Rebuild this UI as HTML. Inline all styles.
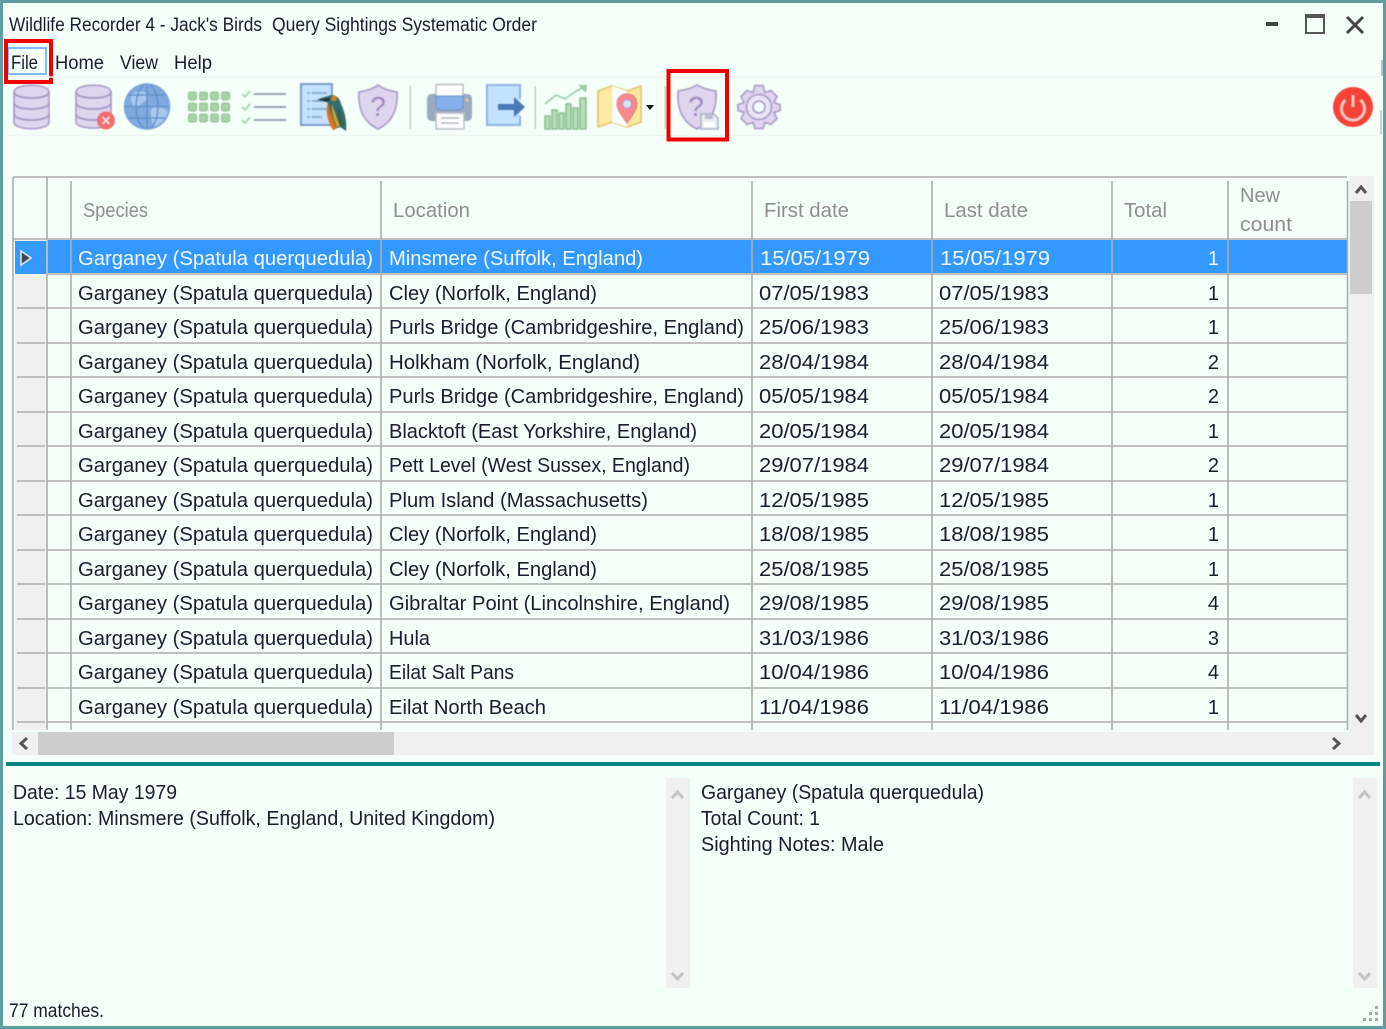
<!DOCTYPE html>
<html>
<head>
<meta charset="utf-8">
<title>Wildlife Recorder 4</title>
<style>
html,body{margin:0;padding:0;background:#f5fffa;}
svg{display:block;font-family:"Liberation Sans",sans-serif;}
.t{font-size:20px;fill:#1c1c2c;}
.s{font-size:20px;fill:#f2f8ff;}
.h{font-size:20px;fill:#8f8f8f;}
.m{font-size:19px;fill:#1c1c2c;}
.e{text-anchor:end;}
.l{stroke:#adadad;stroke-width:1.6;fill:none;}
.a{fill:none;stroke:#555;stroke-width:3;}
.g{fill:none;stroke:#c4c4c4;stroke-width:3;}
.d{fill:#dfd5ee;stroke:#b0a1ca;stroke-width:1.8;}
.i{filter:blur(.5px);}
</style>
</head>
<body>
<svg width="1386" height="1029" viewBox="0 0 1386 1029" xmlns="http://www.w3.org/2000/svg">
<rect width="1386" height="1029" fill="#f5fffa"/>
<rect x="1.5" y="1.5" width="1383" height="1026" fill="none" stroke="#5f9ea0" stroke-width="3"/>

<!-- title -->
<text class="m" x="9" y="31" textLength="253" lengthAdjust="spacingAndGlyphs">Wildlife Recorder 4 - Jack's Birds</text>
<text class="m" x="272" y="31" textLength="265" lengthAdjust="spacingAndGlyphs">Query Sightings Systematic Order</text>
<rect x="1266" y="22" width="12" height="4" fill="#444"/>
<rect x="1306" y="15" width="18" height="18" fill="none" stroke="#555" stroke-width="2"/>
<rect x="1306" y="14" width="18" height="4" fill="#555"/>
<path d="M1347 17L1363 33M1363 17L1347 33" stroke="#444" stroke-width="3" fill="none"/>

<!-- menu -->
<text class="m" x="11" y="69" textLength="27" lengthAdjust="spacingAndGlyphs">File</text>
<text class="m" x="55" y="69" textLength="49" lengthAdjust="spacingAndGlyphs">Home</text>
<text class="m" x="120" y="69" textLength="38" lengthAdjust="spacingAndGlyphs">View</text>
<text class="m" x="174" y="69" textLength="38" lengthAdjust="spacingAndGlyphs">Help</text>
<rect x="8" y="48" width="38" height="26" fill="none" stroke="#55aaff" stroke-width="1.5"/>
<rect x="6" y="41" width="45" height="41" fill="none" stroke="#f00000" stroke-width="4"/>

<!-- toolbar rules -->
<path d="M8 77H1380M8 135.500H1380" stroke="#edf5f1" stroke-width="1.500"/>
<rect x="1381" y="60" width="2" height="16" fill="#b8c4c4"/>
<rect x="1380" y="110" width="2" height="24" fill="#c8d0d0"/>

<g class="i">
<!-- database -->
<g>
<path class="d" d="M14 92C14 83 49 83 49 92V122C49 131 14 131 14 122Z"/>
<path d="M14 92C14 100 49 100 49 92M14 103C14 111 49 111 49 103M14 114C14 122 49 122 49 114" fill="none" stroke="#a797c2" stroke-width="1.800"/>
</g>
<!-- database x -->
<g>
<path class="d" d="M76 92C76 83 111 83 111 92V122C111 130 76 130 76 122Z"/>
<path d="M76 92C76 100 111 100 111 92M76 103C76 111 111 111 111 103M76 114C76 122 111 122 111 114" fill="none" stroke="#a797c2" stroke-width="1.800"/>
<circle cx="106" cy="120.500" r="9" fill="#ee6f6f"/>
<path d="M102.500 117L109.500 124M109.500 117L102.500 124" stroke="#fbdede" stroke-width="1.800"/>
</g>
<!-- globe -->
<g>
<circle cx="147" cy="106.500" r="22.500" fill="#7fa9df"/>
<path d="M132 94C138 90 146 91 148 96C146 102 140 104 136 108C131 106 130 98 132 94ZM152 108C158 106 166 108 168 112C164 122 158 126 153 126C152 120 149 114 152 108Z" fill="#a9c8ee"/>
<ellipse cx="147" cy="106.500" rx="11" ry="22.500" fill="none" stroke="#5f8ecb" stroke-width="1.300"/>
<path d="M147 84V129M125 106.500H170M128 95H166M128 118H166" stroke="#5f8ecb" stroke-width="1.300" fill="none"/>
<circle cx="147" cy="106.500" r="22.500" fill="none" stroke="#7fa6d8" stroke-width="1.500"/>
</g>
<!-- grid -->
<g fill="#a8d2a8" stroke="#90c090" stroke-width="1">
<rect x="188.500" y="92" width="8" height="8" rx="2"/><rect x="199.500" y="92" width="8" height="8" rx="2"/><rect x="210.500" y="92" width="8" height="8" rx="2"/><rect x="221.500" y="92" width="8" height="8" rx="2"/>
<rect x="188.500" y="103" width="8" height="8" rx="2"/><rect x="199.500" y="103" width="8" height="8" rx="2"/><rect x="210.500" y="103" width="8" height="8" rx="2"/><rect x="221.500" y="103" width="8" height="8" rx="2"/>
<rect x="188.500" y="114" width="8" height="8" rx="2"/><rect x="199.500" y="114" width="8" height="8" rx="2"/><rect x="210.500" y="114" width="8" height="8" rx="2"/><rect x="221.500" y="114" width="8" height="8" rx="2"/>
</g>
<!-- checklist -->
<g fill="none">
<path d="M242 94L245 97L250 91M242 107L245 110L250 104M242 120L245 123L250 117" stroke="#a8d4b0" stroke-width="1.800"/>
<path d="M254 94H286M254 107H286M254 120H286" stroke="#8a98a6" stroke-width="1.800"/>
</g>
<!-- doc + bird -->
<g>
<rect x="301" y="84" width="31" height="41" fill="#c3e2ff" stroke="#7f9fcb" stroke-width="2"/>
<path d="M307 93H327M307 101H327M307 109H327M307 117H322" stroke="#7f9fcb" stroke-width="1.500" stroke-dasharray="3 2 14 0"/>
<path d="M318 99L328 96C335 93 340 98 341 104C345 112 347 122 346 131L340 127L333 130C329 122 326 112 328 103Z" fill="#2f6f72"/>
<path d="M328 102C330 111 333 120 337 128L333 130C328 122 325 112 328 102Z" fill="#dd6f1c"/>
<path d="M332 104C335 112 337 119 340 126L337 127C334 120 331 112 332 104Z" fill="#c9a52c"/>
<path d="M338 107C341 114 343 121 343 127L340 126C338 120 337 113 338 107Z" fill="#3f5a48"/>
<path d="M316 100L330 98L329 101Z" fill="#2a2a2a"/>
<circle cx="334" cy="98.500" r="3" fill="#c7802e"/>
</g>
<!-- shield -->
<g>
<path class="d" d="M359 92C366 91 373 89 378 85C383 89 390 91 397 92C398 108 393 122 378 129C363 122 358 108 359 92Z"/>
<text x="378" y="116" font-size="28" text-anchor="middle" fill="#a287bf">?</text>
</g>
<rect x="409.500" y="86" width="1.500" height="43" fill="#c4c8c8"/>
<!-- printer -->
<g>
<rect x="436" y="84.500" width="27" height="18" fill="#ffffff" stroke="#b9bec6" stroke-width="1.500"/>
<path d="M432 94H436V97H463V94H467C470 94 472 96 472 99V116C472 119 470 121 467 121H432C429 121 427 119 427 116V99C427 96 429 94 432 94Z" fill="#9aaabf"/>
<path d="M436 96H463V106C463 108 461 110 459 110H440C438 110 436 108 436 106Z" fill="#85afea" stroke="#6f93c6"/>
<circle cx="467" cy="100" r="1.500" fill="#e6d97e"/>
<rect x="436" y="113" width="28" height="16" fill="#ffffff" stroke="#b9bec6" stroke-width="1.500"/>
<path d="M441 118H459M441 123H459" stroke="#b0b6c0" stroke-width="1.500"/>
</g>
<!-- export -->
<g>
<rect x="487" y="85" width="33" height="40" fill="#c3e2ff"/>
<path d="M520 99V85H487V125H520V116" fill="none" stroke="#8fb2de" stroke-width="2"/>
<path d="M498 104H514V97L525 107L514 117V110H498Z" fill="#4a78b6"/>
</g>
<rect x="534.500" y="86" width="1.500" height="43" fill="#c4c8c8"/>
<!-- chart -->
<g>
<path d="M545 104L556 95L565 99L576 91L584 87" fill="none" stroke="#9ccaa6" stroke-width="1.600"/>
<path d="M578 85L587 85L586 93Z" fill="#9ccaa6"/>
<g fill="#b8deb8" stroke="#86ba8a" stroke-width="1.400">
<rect x="545" y="116" width="5" height="13"/><rect x="552" y="110" width="5" height="19"/><rect x="559" y="113" width="5" height="16"/><rect x="566" y="104" width="5" height="25"/><rect x="573" y="108" width="5" height="21"/><rect x="580" y="98" width="6" height="31"/>
</g>
</g>
<!-- map -->
<g>
<path d="M598 91L612 86L627 91L641 86V122L627 127L612 122L598 127Z" fill="#ffe9a3" stroke="#e3cd80" stroke-width="2"/>
<path d="M612 86L627 91V127L612 122Z" fill="#fbfbfb"/>
<path d="M627 123C620 113 617 109 617 104C617 98 621 94 627 94C633 94 637 98 637 104C637 109 634 113 627 123Z" fill="#f58b8b" stroke="#e77a7a"/>
<circle cx="627" cy="104" r="4.500" fill="#d9e4f2" stroke="#ab8cc0"/>
</g>
<rect x="664.500" y="86" width="1.500" height="43" fill="#c4c8c8"/>
<!-- shield save -->
<g>
<path class="d" d="M678 91C685 90 692 88 697 85C702 88 709 90 716 91C717 108 712 122 697 129C682 122 677 108 678 91Z"/>
<text x="696" y="116" font-size="28" text-anchor="middle" fill="#a287bf">?</text>
<path d="M701 114H714L718 118V129H701Z" fill="#e9edf4" stroke="#a9b2c2" stroke-width="1.500"/>
<rect x="705" y="114" width="8" height="5" fill="#b8c0cf"/>
<rect x="704" y="122" width="11" height="5" fill="#fff"/>
</g>
<!-- gear -->
<g>
<path class="d" d="M755 85H763L765 92L771 90L777 96L774 102L780 104V110L774 112L777 118L771 124L765 122L763 128H755L753 122L747 124L741 118L744 112L738 110V104L744 102L741 96L747 90L753 92Z" transform="translate(0 .5)"/>
<circle cx="759" cy="107" r="12.500" fill="#ece5f5" stroke="#b0a1ca" stroke-width="1.800"/>
<circle cx="759" cy="107" r="6" fill="#f5fffa" stroke="#b0a1ca" stroke-width="1.800"/>
</g>
<!-- power -->
<g>
<circle cx="1353" cy="107" r="20" fill="#f44336"/>
<path d="M1345.500 100A11.500 11.500 0 1 0 1360.500 100" fill="none" stroke="#fbc9c5" stroke-width="3"/>
<path d="M1353 95V107" stroke="#fbc9c5" stroke-width="3"/>
</g>
</g>
<path d="M646 105H654L650 110Z" fill="#111"/>
<rect x="668.500" y="71" width="58.500" height="68.500" fill="none" stroke="#f00000" stroke-width="4"/>

<!-- selected row + row header bg -->
<rect x="15" y="240" width="32" height="490" fill="#f0f0f0"/>
<rect x="71" y="240" width="1276" height="33" fill="#3399ff"/>
<rect x="48" y="240" width="23" height="33" fill="#3399ff"/>
<rect x="15" y="241" width="31" height="33" fill="#3399ff"/>
<path d="M21 251L31 258L21 265Z" fill="#444" stroke="#dfeaf5" stroke-width="1.500"/>

<!-- grid lines -->
<path class="l" d="M13 177H1347M13 177V730M47 177V730M71 181V730M381 181V730M752 181V730M932 181V730M1112 181V730M1228 181V730M1347.500 181V730"/>
<path class="l" d="M13 239H1347M47 274H1347M47 308H1347M47 343H1347M47 377H1347M47 412H1347M47 446H1347M47 481H1347M47 515H1347M47 550H1347M47 584H1347M47 619H1347M47 653H1347M47 688H1347M47 722H1347"/>
<path class="l" d="M17 308H45M17 343H45M17 377H45M17 412H45M17 446H45M17 481H45M17 515H45M17 550H45M17 584H45M17 619H45M17 653H45M17 688H45M17 722H45"/>

<!-- header -->
<text class="h" x="83" y="217" textLength="65" lengthAdjust="spacingAndGlyphs">Species</text>
<text class="h" x="393" y="217" textLength="77" lengthAdjust="spacingAndGlyphs">Location</text>
<text class="h" x="764" y="217" textLength="85" lengthAdjust="spacingAndGlyphs">First date</text>
<text class="h" x="944" y="217" textLength="84" lengthAdjust="spacingAndGlyphs">Last date</text>
<text class="h" x="1124" y="217" textLength="43" lengthAdjust="spacingAndGlyphs">Total</text>
<text class="h" x="1240" y="202" textLength="40" lengthAdjust="spacingAndGlyphs">New</text>
<text class="h" x="1240" y="231" textLength="52" lengthAdjust="spacingAndGlyphs">count</text>

<!-- rows -->
<text class="s" x="78" y="265" textLength="295" lengthAdjust="spacingAndGlyphs">Garganey (Spatula querquedula)</text><text class="s" x="389" y="265" textLength="254" lengthAdjust="spacingAndGlyphs">Minsmere (Suffolk, England)</text><text class="s" x="760" y="265" textLength="110" lengthAdjust="spacingAndGlyphs">15/05/1979</text><text class="s" x="940" y="265" textLength="110" lengthAdjust="spacingAndGlyphs">15/05/1979</text><text class="s e" x="1219" y="265">1</text>

<text class="t" x="78" y="300" textLength="295" lengthAdjust="spacingAndGlyphs">Garganey (Spatula querquedula)</text><text class="t" x="389" y="300" textLength="208" lengthAdjust="spacingAndGlyphs">Cley (Norfolk, England)</text><text class="t" x="759" y="300" textLength="110" lengthAdjust="spacingAndGlyphs">07/05/1983</text><text class="t" x="939" y="300" textLength="110" lengthAdjust="spacingAndGlyphs">07/05/1983</text><text class="t e" x="1219" y="300">1</text>

<text class="t" x="78" y="334" textLength="295" lengthAdjust="spacingAndGlyphs">Garganey (Spatula querquedula)</text><text class="t" x="389" y="334" textLength="355" lengthAdjust="spacingAndGlyphs">Purls Bridge (Cambridgeshire, England)</text><text class="t" x="759" y="334" textLength="110" lengthAdjust="spacingAndGlyphs">25/06/1983</text><text class="t" x="939" y="334" textLength="110" lengthAdjust="spacingAndGlyphs">25/06/1983</text><text class="t e" x="1219" y="334">1</text>

<text class="t" x="78" y="369" textLength="295" lengthAdjust="spacingAndGlyphs">Garganey (Spatula querquedula)</text><text class="t" x="389" y="369" textLength="251" lengthAdjust="spacingAndGlyphs">Holkham (Norfolk, England)</text><text class="t" x="759" y="369" textLength="110" lengthAdjust="spacingAndGlyphs">28/04/1984</text><text class="t" x="939" y="369" textLength="110" lengthAdjust="spacingAndGlyphs">28/04/1984</text><text class="t e" x="1219" y="369">2</text>

<text class="t" x="78" y="403" textLength="295" lengthAdjust="spacingAndGlyphs">Garganey (Spatula querquedula)</text><text class="t" x="389" y="403" textLength="355" lengthAdjust="spacingAndGlyphs">Purls Bridge (Cambridgeshire, England)</text><text class="t" x="759" y="403" textLength="110" lengthAdjust="spacingAndGlyphs">05/05/1984</text><text class="t" x="939" y="403" textLength="110" lengthAdjust="spacingAndGlyphs">05/05/1984</text><text class="t e" x="1219" y="403">2</text>

<text class="t" x="78" y="438" textLength="295" lengthAdjust="spacingAndGlyphs">Garganey (Spatula querquedula)</text><text class="t" x="389" y="438" textLength="308" lengthAdjust="spacingAndGlyphs">Blacktoft (East Yorkshire, England)</text><text class="t" x="759" y="438" textLength="110" lengthAdjust="spacingAndGlyphs">20/05/1984</text><text class="t" x="939" y="438" textLength="110" lengthAdjust="spacingAndGlyphs">20/05/1984</text><text class="t e" x="1219" y="438">1</text>

<text class="t" x="78" y="472" textLength="295" lengthAdjust="spacingAndGlyphs">Garganey (Spatula querquedula)</text><text class="t" x="389" y="472" textLength="301" lengthAdjust="spacingAndGlyphs">Pett Level (West Sussex, England)</text><text class="t" x="759" y="472" textLength="110" lengthAdjust="spacingAndGlyphs">29/07/1984</text><text class="t" x="939" y="472" textLength="110" lengthAdjust="spacingAndGlyphs">29/07/1984</text><text class="t e" x="1219" y="472">2</text>

<text class="t" x="78" y="507" textLength="295" lengthAdjust="spacingAndGlyphs">Garganey (Spatula querquedula)</text><text class="t" x="389" y="507" textLength="259" lengthAdjust="spacingAndGlyphs">Plum Island (Massachusetts)</text><text class="t" x="759" y="507" textLength="110" lengthAdjust="spacingAndGlyphs">12/05/1985</text><text class="t" x="939" y="507" textLength="110" lengthAdjust="spacingAndGlyphs">12/05/1985</text><text class="t e" x="1219" y="507">1</text>

<text class="t" x="78" y="541" textLength="295" lengthAdjust="spacingAndGlyphs">Garganey (Spatula querquedula)</text><text class="t" x="389" y="541" textLength="208" lengthAdjust="spacingAndGlyphs">Cley (Norfolk, England)</text><text class="t" x="759" y="541" textLength="110" lengthAdjust="spacingAndGlyphs">18/08/1985</text><text class="t" x="939" y="541" textLength="110" lengthAdjust="spacingAndGlyphs">18/08/1985</text><text class="t e" x="1219" y="541">1</text>

<text class="t" x="78" y="576" textLength="295" lengthAdjust="spacingAndGlyphs">Garganey (Spatula querquedula)</text><text class="t" x="389" y="576" textLength="208" lengthAdjust="spacingAndGlyphs">Cley (Norfolk, England)</text><text class="t" x="759" y="576" textLength="110" lengthAdjust="spacingAndGlyphs">25/08/1985</text><text class="t" x="939" y="576" textLength="110" lengthAdjust="spacingAndGlyphs">25/08/1985</text><text class="t e" x="1219" y="576">1</text>

<text class="t" x="78" y="610" textLength="295" lengthAdjust="spacingAndGlyphs">Garganey (Spatula querquedula)</text><text class="t" x="389" y="610" textLength="341" lengthAdjust="spacingAndGlyphs">Gibraltar Point (Lincolnshire, England)</text><text class="t" x="759" y="610" textLength="110" lengthAdjust="spacingAndGlyphs">29/08/1985</text><text class="t" x="939" y="610" textLength="110" lengthAdjust="spacingAndGlyphs">29/08/1985</text><text class="t e" x="1219" y="610">4</text>

<text class="t" x="78" y="645" textLength="295" lengthAdjust="spacingAndGlyphs">Garganey (Spatula querquedula)</text><text class="t" x="389" y="645" textLength="41" lengthAdjust="spacingAndGlyphs">Hula</text><text class="t" x="759" y="645" textLength="110" lengthAdjust="spacingAndGlyphs">31/03/1986</text><text class="t" x="939" y="645" textLength="110" lengthAdjust="spacingAndGlyphs">31/03/1986</text><text class="t e" x="1219" y="645">3</text>

<text class="t" x="78" y="679" textLength="295" lengthAdjust="spacingAndGlyphs">Garganey (Spatula querquedula)</text><text class="t" x="389" y="679" textLength="125" lengthAdjust="spacingAndGlyphs">Eilat Salt Pans</text><text class="t" x="759" y="679" textLength="110" lengthAdjust="spacingAndGlyphs">10/04/1986</text><text class="t" x="939" y="679" textLength="110" lengthAdjust="spacingAndGlyphs">10/04/1986</text><text class="t e" x="1219" y="679">4</text>

<text class="t" x="78" y="714" textLength="295" lengthAdjust="spacingAndGlyphs">Garganey (Spatula querquedula)</text><text class="t" x="389" y="714" textLength="157" lengthAdjust="spacingAndGlyphs">Eilat North Beach</text><text class="t" x="759" y="714" textLength="110" lengthAdjust="spacingAndGlyphs">11/04/1986</text><text class="t" x="939" y="714" textLength="110" lengthAdjust="spacingAndGlyphs">11/04/1986</text><text class="t e" x="1219" y="714">1</text>

<!-- table scrollbars -->
<rect x="1349" y="176" width="25" height="556" fill="#f0f0f0"/>
<rect x="1350" y="201" width="22" height="93" fill="#cdcdcd"/>
<path class="a" d="M1356 193L1361 187L1366 193"/>
<path class="a" d="M1356 715L1361 721L1366 715"/>
<rect x="12" y="732" width="1362" height="23" fill="#f0f0f0"/>
<rect x="38" y="732" width="356" height="23" fill="#cdcdcd"/>
<path class="a" d="M27 738L21 743.500L27 749"/>
<path class="a" d="M1333 738L1339 743.500L1333 749"/>

<!-- splitter -->
<rect x="6" y="762" width="1374" height="4" fill="#0a8482"/>

<!-- details -->
<text class="t" x="13" y="799" textLength="164" lengthAdjust="spacingAndGlyphs">Date: 15 May 1979</text>
<text class="t" x="13" y="825" textLength="482" lengthAdjust="spacingAndGlyphs">Location: Minsmere (Suffolk, England, United Kingdom)</text>
<text class="t" x="701" y="799" textLength="283" lengthAdjust="spacingAndGlyphs">Garganey (Spatula querquedula)</text>
<text class="t" x="701" y="825" textLength="119" lengthAdjust="spacingAndGlyphs">Total Count: 1</text>
<text class="t" x="701" y="851" textLength="183" lengthAdjust="spacingAndGlyphs">Sighting Notes: Male</text>

<rect x="666" y="778" width="24" height="210" fill="#f0f0f0"/>
<path class="g" d="M672 798L677.500 792L683 798"/>
<path class="g" d="M672 973L677.500 979L683 973"/>
<rect x="1353" y="778" width="24" height="210" fill="#f0f0f0"/>
<path class="g" d="M1359 798L1364.500 792L1370 798"/>
<path class="g" d="M1359 973L1364.500 979L1370 973"/>

<!-- status -->
<text class="m" x="9" y="1017" textLength="95" lengthAdjust="spacingAndGlyphs">77 matches.</text>
<g fill="#a8a8a8">
<rect x="1375" y="1006" width="3" height="3"/>
<rect x="1369" y="1012" width="3" height="3"/><rect x="1375" y="1012" width="3" height="3"/>
<rect x="1363" y="1018" width="3" height="3"/><rect x="1369" y="1018" width="3" height="3"/><rect x="1375" y="1018" width="3" height="3"/>
</g>
</svg>
</body>
</html>
